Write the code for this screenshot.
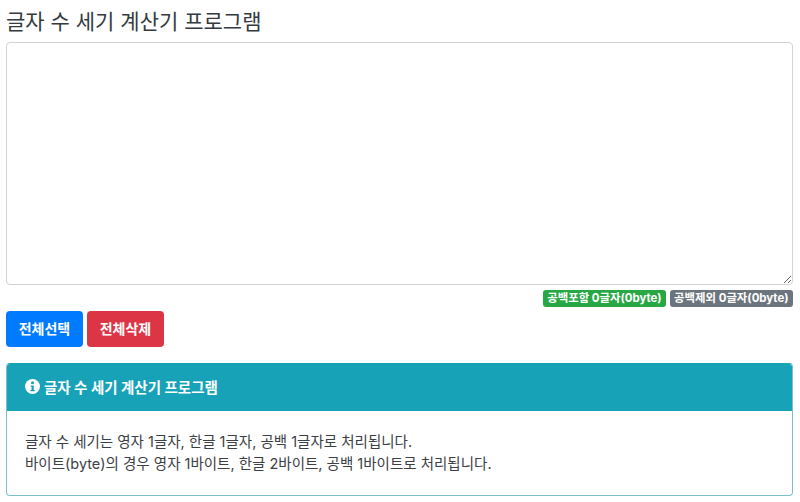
<div class="page">
  <h1>글자 수 세기 계산기 프로그램</h1>
  <textarea class="input" aria-label="글자 수 세기 입력"></textarea>
  <div class="badges">
    <span class="badge green">공백포함 0글자(0byte)</span>
    <span class="badge gray">공백제외 0글자(0byte)</span>
  </div>
  <div class="buttons">
    <button class="btn blue">전체선택</button>
    <button class="btn red">전체삭제</button>
  </div>
  <section class="card">
    <header>
      <svg viewBox="0 0 14 14" width="15" height="15" aria-hidden="true">
        <circle cx="7" cy="7" r="7" fill="#fff" />
        <circle cx="7" cy="3.6" r="1.4" fill="#17a2b8" />
        <path d="M5.3 6h2.9v4.2h.9v1.3H5.1v-1.3h1V7.3h-.8z" fill="#17a2b8" />
      </svg>
      <span>글자 수 세기 계산기 프로그램</span>
    </header>
    <div class="body">
      <p>글자 수 세기는 영자 1글자, 한글 1글자, 공백 1글자로 처리됩니다.</p>
      <p>바이트(byte)의 경우 영자 1바이트, 한글 2바이트, 공백 1바이트로 처리됩니다.</p>
    </div>
  </section>
</div>

<style>
  :global(body) {
    margin: 0;
    background: #fff;
    color: #212529;
    font-family: Inter, "Noto Sans CJK KR", sans-serif;
  }
  .page {
    padding: 6px 7px 0 6px;
    display: flex;
    flex-direction: column;
  }
  h1 {
    margin: 0;
    height: 36px;
    font-size: 21px;
    line-height: 32px;
    font-weight: 400;
    color: #343a40;
  }
  .input {
    display: block;
    box-sizing: border-box;
    width: 100%;
    height: 242.5px;
    margin: 0;
    border: 1px solid #ced4da;
    border-radius: 4px;
    background: #fff;
    padding: 6px 12px;
  }
  .badges {
    display: flex;
    justify-content: flex-end;
    gap: 3.5px;
    margin-top: 5px;
  }
  .badge {
    height: 17px;
    box-sizing: border-box;
    padding: 0 4.5px;
    border-radius: 3px;
    color: #fff;
    font-size: 11.4px;
    line-height: 16px;
    font-weight: 700;
    white-space: nowrap;
  }
  .green { background: #28a745; }
  .gray { background: #6c757d; }
  .buttons {
    display: flex;
    gap: 4px;
    margin-top: 4.5px;
  }
  .btn {
    width: 77px;
    height: 36px;
    padding: 0;
    border: none;
    border-radius: 4px;
    color: #fff;
    font: 700 14px/36px Inter, "Noto Sans CJK KR", sans-serif;
  }
  .blue { background: #007bff; }
  .red { background: #dc3545; }
  .card {
    margin-top: 15.5px;
    box-sizing: border-box;
    height: 133px;
    border: 1px solid #7fbfcb;
    border-top-color: #17a2b8;
    border-radius: 4px;
    overflow: hidden;
  }
  header {
    display: flex;
    align-items: center;
    gap: 4px;
    height: 47px;
    padding: 0 18px 2px;
    box-sizing: border-box;
    background: #17a2b8;
    color: #fff;
    font-size: 14.5px;
    font-weight: 700;
  }
  .body {
    padding: 20px 18px 0;
    font-size: 14.5px;
    line-height: 22px;
    color: #3b4046;
  }
  p { margin: 0; }
</style>
